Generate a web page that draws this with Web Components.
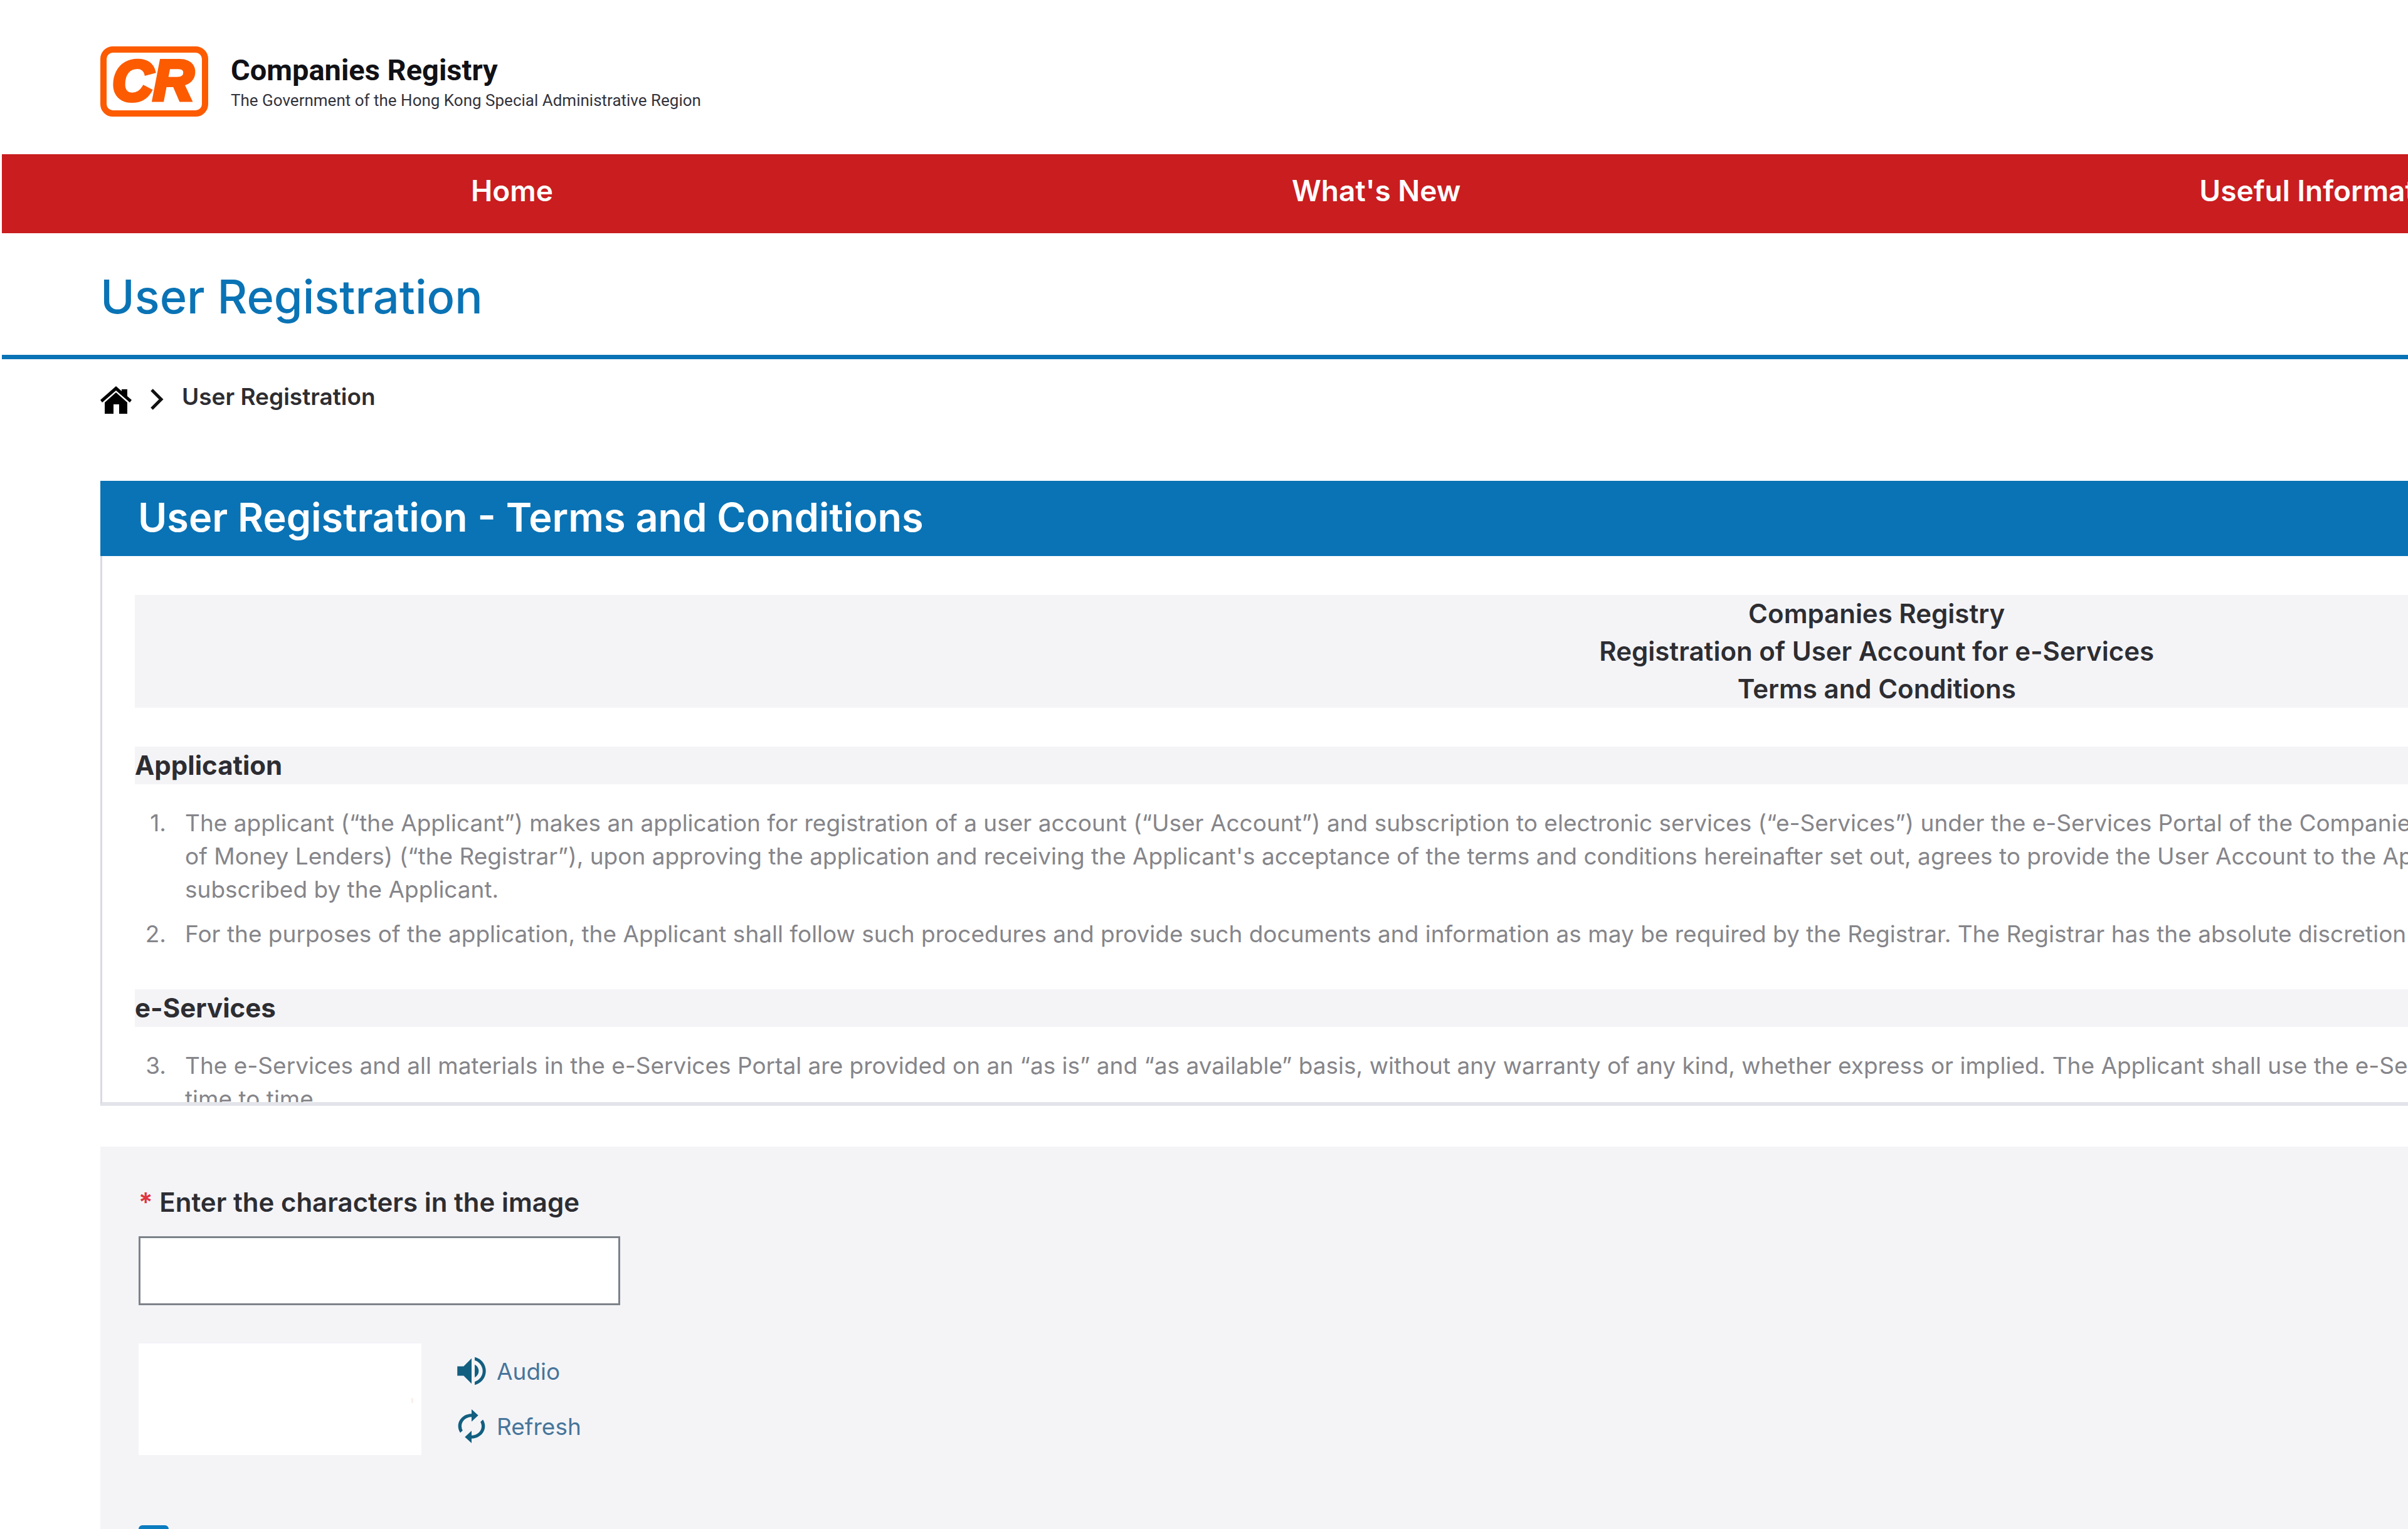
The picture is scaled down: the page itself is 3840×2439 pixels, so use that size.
<!DOCTYPE html>
<html lang="en">
<head>
<meta charset="utf-8">
<title>User Registration</title>
<style>
    html, body{
        margin: 0;
        height: 100%;
        overflow: hidden;
    }
    body{
        background-color: white;
        color: #2d2d32;
        font-family: Inter, "Open Sans", sans-serif;
        --blue: #0a73b5;
        --red: #c91d1f;
        --grey: #f4f4f7;
        --gutter: 157px;
    }
    main{
        /* the portal is laid out wider than the window */
        width: 156vw;
        padding: 0 8px 0 3px;
        box-sizing: border-box;
    }
</style>
</head>
<body>
<main>
    <portal-header main="Companies Registry" sub="The Government of the Hong Kong Special Administrative Region"></portal-header>
    <portal-nav>
        <a href="#home">Home</a>
        <a href="#news">What's New</a>
        <a href="#info">Useful Information</a>
    </portal-nav>
    <page-title>User Registration</page-title>
    <bread-crumb>User Registration</bread-crumb>
    <terms-panel>
        <span slot="title">User Registration - Terms and Conditions</span>
        <terms-banner>
            Companies Registry<br>
            Registration of User Account for e-Services<br>
            Terms and Conditions
        </terms-banner>
        <terms-section main="Application">
            <terms-item number="1">The applicant (“the Applicant”) makes an application for registration of a user account (“User Account”) and subscription to electronic services (“e-Services”) under the e-Services Portal of the Companies Registry<br>
            of Money Lenders) (“the Registrar”), upon approving the application and receiving the Applicant's acceptance of the terms and conditions hereinafter set out, agrees to provide the User Account to the Applicant<br>
            subscribed by the Applicant.</terms-item>
            <terms-item number="2">For the purposes of the application, the Applicant shall follow such procedures and provide such documents and information as may be required by the Registrar. The Registrar has the absolute discretion</terms-item>
        </terms-section>
        <terms-section main="e-Services">
            <terms-item number="3">The e-Services and all materials in the e-Services Portal are provided on an “as is” and “as available” basis, without any warranty of any kind, whether express or implied. The Applicant shall use the e-Services<br>
            time to time.</terms-item>
        </terms-section>
    </terms-panel>
    <captcha-form label="Enter the characters in the image"></captcha-form>
</main>

<script>
class PortalHeader extends HTMLElement{
    constructor(){
        super()
        this.template = document.createElement('template');
        this.main = this.getAttribute('main');
        this.sub = this.getAttribute('sub');

        this.template.innerHTML = `
        <style>
            :host{
                display: flex;
                gap: 36px;
                padding: 74px var(--gutter) 60px;
                font-family: Roboto, sans-serif;
                white-space: nowrap;
            }
            svg{
                width: 172px;
                height: 112px;
                flex: none;
                overflow: visible;
            }
            .text-cont{
                padding-top: 11px;
            }
            p{
                margin: 0;
            }
            .main{
                font-size: 47px;
                line-height: 54px;
                font-weight: 700;
                color: #111116;
            }
            .sub{
                font-size: 26px;
                line-height: 42px;
                color: #33333c;
            }
        </style>
        <svg viewBox="0 0 172 112" role="img" aria-label="CR logo">
            <rect x="5" y="5" width="162" height="102" rx="15" fill="white" stroke="#fc5b00" stroke-width="10"/>
            <text x="84" y="86" text-anchor="middle" font-family="Liberation Sans, sans-serif" font-size="90" font-weight="700" font-style="italic" fill="#fc5b00" stroke="#fc5b00" stroke-width="6">CR</text>
        </svg>
        <div class="text-cont">
            <p class="main">${this.main}</p>
            <p class="sub">${this.sub}</p>
        </div>
        `;

        this.attachShadow({mode: 'open'});
        this.shadowRoot.appendChild(this.template.content.cloneNode(true));
    }
}

class PortalNav extends HTMLElement{
    constructor(){
        super()
        this.template = document.createElement('template');

        this.template.innerHTML = `
        <style>
            :host{
                display: block;
                background-color: var(--red);
            }
            nav{
                display: flex;
                gap: 1178px;
                padding: 0 748px 10px;
                white-space: nowrap;
            }
            ::slotted(a){
                color: white;
                font-size: 46px;
                line-height: 116px;
                font-weight: 600;
                text-decoration: none;
            }
        </style>
        <nav><slot></slot></nav>
        `;

        this.attachShadow({mode: 'open'});
        this.shadowRoot.appendChild(this.template.content.cloneNode(true));
    }
}

class PageTitle extends HTMLElement{
    constructor(){
        super()
        this.template = document.createElement('template');

        this.template.innerHTML = `
        <style>
            :host{
                display: block;
                padding: 51px var(--gutter) 43px;
                border-bottom: 7px solid var(--blue);
            }
            h1{
                margin: 0;
                color: var(--blue);
                font-size: 74px;
                line-height: 100px;
                font-weight: 500;
            }
        </style>
        <h1><slot></slot></h1>
        `;

        this.attachShadow({mode: 'open'});
        this.shadowRoot.appendChild(this.template.content.cloneNode(true));
    }
}

class BreadCrumb extends HTMLElement{
    constructor(){
        super()
        this.template = document.createElement('template');

        this.template.innerHTML = `
        <style>
            :host{
                display: block;
                padding: 43px var(--gutter) 107px;
            }
            nav{
                display: flex;
                gap: 29px;
            }
            a{
                display: flex;
                color: black;
            }
            .home{
                width: 50px;
                height: 44px;
            }
            .arrow{
                width: 22px;
                height: 42px;
            }
            span{
                font-size: 37px;
                line-height: 34px;
                font-weight: 600;
            }
        </style>
        <nav aria-label="Breadcrumb">
            <a href="#home" aria-label="Home">
                <svg class="home" viewBox="0 0 50 44">
                    <path d="M25 0 34 8V5h9v11l7 6-3 4L25 7 3 26 0 22Z"/>
                    <path d="M25 10 43 26V44H30V29H21V44H7V26Z"/>
                </svg>
            </a>
            <svg class="arrow" viewBox="0 0 22 42">
                <path d="M3 6 18 21 3 36" fill="none" stroke="#111111" stroke-width="5"/>
            </svg>
            <span><slot></slot></span>
        </nav>
        `;

        this.attachShadow({mode: 'open'});
        this.shadowRoot.appendChild(this.template.content.cloneNode(true));
    }
}

class TermsPanel extends HTMLElement{
    constructor(){
        super()
        this.template = document.createElement('template');

        this.template.innerHTML = `
        <style>
            :host{
                display: block;
                margin: 0 var(--gutter) 65px;
            }
            h2{
                margin: 0;
                padding: 0 60px 4px;
                background-color: var(--blue);
                color: white;
                font-size: 63px;
                line-height: 116px;
                font-weight: 600;
            }
            .body-cont{
                box-sizing: border-box;
                height: 877px;
                padding: 62px 52px;
                overflow: hidden auto;
                border: 3px solid #d9dae2;
                border-top: none;
                border-bottom: 6px solid #e2e4e9;
            }
        </style>
        <h2><slot name="title"></slot></h2>
        <div class="body-cont"><slot></slot></div>
        `;

        this.attachShadow({mode: 'open'});
        this.shadowRoot.appendChild(this.template.content.cloneNode(true));
    }
}

class TermsBanner extends HTMLElement{
    constructor(){
        super()
        this.template = document.createElement('template');

        this.template.innerHTML = `
        <style>
            :host{
                display: block;
                background-color: var(--grey);
                font-size: 42px;
                line-height: 60px;
                font-weight: 600;
                text-align: center;
            }
        </style>
        <slot></slot>
        `;

        this.attachShadow({mode: 'open'});
        this.shadowRoot.appendChild(this.template.content.cloneNode(true));
    }
}

class TermsSection extends HTMLElement{
    constructor(){
        super()
        this.template = document.createElement('template');
        this.main = this.getAttribute('main');

        this.template.innerHTML = `
        <style>
            :host{
                display: block;
                margin-top: 62px;
            }
            h3{
                margin: 0 0 35px;
                background-color: var(--grey);
                font-size: 42px;
                line-height: 60px;
                font-weight: 700;
            }
            .list-cont{
                display: flex;
                flex-direction: column;
                gap: 18px;
            }
        </style>
        <h3>${this.main}</h3>
        <div class="list-cont" role="list"><slot></slot></div>
        `;

        this.attachShadow({mode: 'open'});
        this.shadowRoot.appendChild(this.template.content.cloneNode(true));
    }
}

class TermsItem extends HTMLElement{
    constructor(){
        super()
        this.template = document.createElement('template');
        this.number = this.getAttribute('number');

        this.template.innerHTML = `
        <style>
            :host{
                display: grid;
                grid-template-columns: 50px 1fr;
                gap: 30px;
                color: #85858a;
                font-size: 37px;
                line-height: 53px;
                white-space: nowrap;
            }
            .number{
                text-align: right;
            }
        </style>
        <span class="number">${this.number}.</span>
        <div><slot></slot></div>
        `;

        this.attachShadow({mode: 'open'});
        this.shadowRoot.appendChild(this.template.content.cloneNode(true));
    }
    connectedCallback(){
        this.setAttribute('role', 'listitem');
    }
}

class CaptchaForm extends HTMLElement{
    constructor(){
        super()
        this.template = document.createElement('template');
        this.label = this.getAttribute('label');

        this.template.innerHTML = `
        <style>
            :host{
                display: block;
                margin: 0 var(--gutter);
                background-color: var(--grey);
            }
            form{
                display: flex;
                flex-direction: column;
                align-items: flex-start;
                padding: 60px 61px;
            }
            label{
                margin-bottom: 25px;
                font-size: 42px;
                line-height: 58px;
                font-weight: 600;
            }
            label span{
                color: #e0343f;
            }
            .answer{
                box-sizing: border-box;
                width: 768px;
                height: 110px;
                padding: 0 24px;
                border: 3px solid #7c828a;
                border-radius: 0;
                background-color: white;
                font: inherit;
                font-size: 42px;
            }
            .captcha-cont{
                display: flex;
                gap: 56px;
                margin: 61px 0 112px;
            }
            .captcha-img{
                width: 451px;
                height: 178px;
                background-color: white;
            }
            .button-cont{
                display: flex;
                flex-direction: column;
                align-items: flex-start;
            }
            button{
                display: flex;
                align-items: center;
                gap: 16px;
                height: 88px;
                padding: 0;
                border: none;
                background: none;
                color: #47759a;
                font: inherit;
                font-size: 37px;
            }
            button svg{
                width: 48px;
                height: 54px;
                fill: #125f80;
            }
            .agree{
                appearance: none;
                width: 48px;
                height: 48px;
                margin: 0;
                border-radius: 6px;
                background-color: #0b7cc0;
            }
        </style>
        <form>
            <label for="answer"><span>*</span> ${this.label}</label>
            <input class="answer" id="answer" type="text" autocomplete="off">
            <div class="captcha-cont">
                <svg class="captcha-img" viewBox="0 0 451 178" role="img" aria-label="Captcha">
                    <rect x="435" y="87" width="3" height="8" fill="#fbeeea"/>
                </svg>
                <div class="button-cont">
                    <button type="button">
                        <svg viewBox="2.500 2.500 19 19"><path d="M3 9v6h4l5 5V4L7 9H3zm13.500 3c0-1.770-1.020-3.290-2.500-4.030v8.050c1.480-.73 2.500-2.250 2.500-4.020zM14 3.230v2.060c2.890.86 5 3.540 5 6.710s-2.110 5.850-5 6.710v2.060c4.010-.91 7-4.490 7-8.770s-2.990-7.860-7-8.770z"/></svg>
                        Audio
                    </button>
                    <button type="button">
                        <svg viewBox="3 1 18 22" preserveAspectRatio="none"><path d="M12 6v3l4-4-4-4v3c-4.420 0-8 3.580-8 8 0 1.570.46 3.030 1.240 4.260L6.700 14.800A5.870 5.870 0 0 1 6 12c0-3.310 2.690-6 6-6zm6.760 1.740L17.300 9.200c.44.84.7 1.790.7 2.800 0 3.310-2.690 6-6 6v-3l-4 4 4 4v-3c4.420 0 8-3.580 8-8 0-1.570-.46-3.030-1.240-4.260z"/></svg>
                        Refresh
                    </button>
                </div>
            </div>
            <input class="agree" type="checkbox" checked aria-label="Accept">
        </form>
        `;

        this.attachShadow({mode: 'open'});
        this.shadowRoot.appendChild(this.template.content.cloneNode(true));
    }
}

window.customElements.define('portal-header', PortalHeader);
window.customElements.define('portal-nav', PortalNav);
window.customElements.define('page-title', PageTitle);
window.customElements.define('bread-crumb', BreadCrumb);
window.customElements.define('terms-panel', TermsPanel);
window.customElements.define('terms-banner', TermsBanner);
window.customElements.define('terms-section', TermsSection);
window.customElements.define('terms-item', TermsItem);
window.customElements.define('captcha-form', CaptchaForm);
</script>
</body>
</html>
